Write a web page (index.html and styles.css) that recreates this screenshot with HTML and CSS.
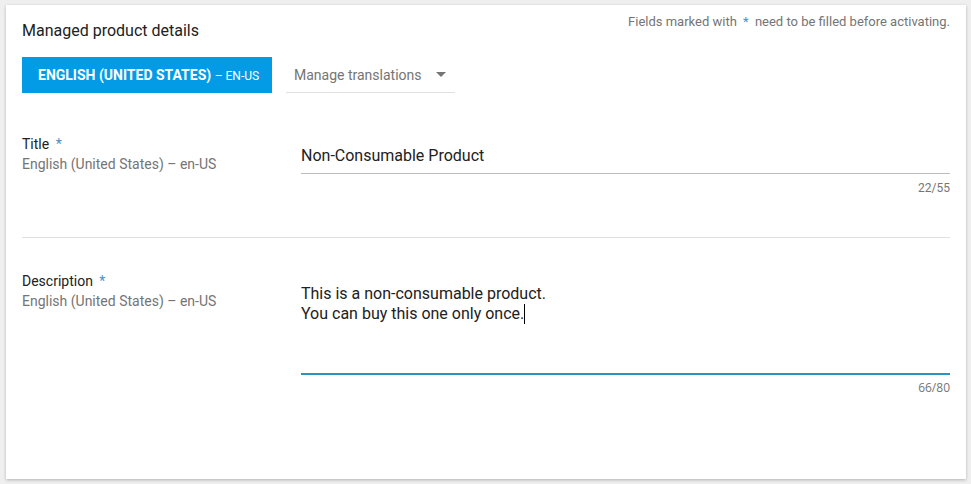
FILE: index.html
```html
<!DOCTYPE html>
<html lang="en">
<head>
    <meta charset="UTF-8">
    <title>Managed product details</title>
    <link rel="stylesheet" href="styles.css">
</head>
<body>

<div class="card">
    <div class="card-head">
        <h2>Managed product details</h2>
        <p class="note">Fields marked with <span class="req">*</span> need to be filled before activating.</p>
    </div>

    <div class="toolbar">
        <button class="lang-btn"><b>ENGLISH (UNITED STATES)</b> <span>– EN-US</span></button>
        <div class="dropdown">
            <span>Manage translations</span>
            <svg width="10" height="5" viewBox="0 0 10 5"><path d="M0 0h10L5 5z" fill="#757575"/></svg>
        </div>
    </div>

    <div class="row row-title">
        <div class="label">
            <div class="name">Title <span class="req">*</span></div>
            <div class="sub">English (United States) – en-US</div>
        </div>
        <div class="field">
            <div class="input">Non-Consumable Product</div>
            <div class="count">22/55</div>
        </div>
    </div>

    <div class="row row-desc">
        <div class="label">
            <div class="name">Description <span class="req">*</span></div>
            <div class="sub">English (United States) – en-US</div>
        </div>
        <div class="field">
            <div class="input textarea focused">This is a non-consumable product.<br>You can buy this one only once.<span class="caret"></span></div>
            <div class="count count-alt">66/80</div>
        </div>
    </div>
</div>

</body>
</html>
```

FILE: styles.css
```css
body {
    margin: 0;
    padding: 5px 5px 5px 6px;
    background-color: #efefef;
    font-family: Roboto, "Liberation Sans", sans-serif;
    color: #212121;
}
.card {
    background-color: white;
    height: 474px;
    box-sizing: border-box;
    padding: 9px 16px 0 16px;
    box-shadow: 0 1px 3px rgba(0, 0, 0, 0.25);
}
.card-head {
    display: flex;
    justify-content: space-between;
    align-items: flex-start;
}
.card-head h2 {
    margin: 7px 0 0 0;
    font-size: 16px;
    font-weight: normal;
    line-height: 20px;
}
.note {
    margin: 0;
    font-size: 13px;
    line-height: 16px;
    color: #757575;
}
.req {
    color: #4a90c8;
    margin: 0 3px;
}
.toolbar {
    display: flex;
    margin-top: 16px;
    gap: 14px;
}
.lang-btn {
    width: 250px;
    height: 36px;
    border: none;
    background-color: #039be5;
    color: white;
    font-family: Roboto, "Liberation Sans", sans-serif;
    font-size: 14px;
    padding: 0 14px 0 16px;
    text-align: left;
    white-space: nowrap;
}
.lang-btn b {
    font-weight: bold;
}
.lang-btn span {
    font-size: 12px;
}
.dropdown {
    width: 169px;
    height: 36px;
    box-sizing: border-box;
    border-bottom: 1px solid #e0e0e0;
    display: flex;
    align-items: center;
    justify-content: space-between;
    padding: 0 9px 0 8px;
    font-size: 14px;
    color: #757575;
}
.row {
    display: flex;
}
.row-title {
    padding: 41px 0 41px 0;
    border-bottom: 1px solid #e0e0e0;
}
.row-desc {
    padding-top: 33px;
}
.label {
    width: 279px;
    flex-shrink: 0;
    font-size: 14px;
    line-height: 20px;
}
.sub {
    color: #757575;
}
.field {
    flex: 1;
}
.input {
    margin-top: 10px;
    font-size: 16px;
    line-height: 24px;
    padding-bottom: 5px;
    border-bottom: 1px solid #bdbdbd;
}
.textarea {
    margin-top: 13px;
    line-height: 20px;
    height: 89px;
    box-sizing: content-box;
    padding-bottom: 0;
}
.focused {
    border-bottom: 2px solid #2a93c1;
}
.caret {
    display: inline-block;
    width: 1px;
    height: 20px;
    background-color: #000;
    vertical-align: top;
}
.count {
    margin-top: 6px;
    text-align: right;
    font-size: 12px;
    line-height: 16px;
    color: #757575;
}
.count-alt {
    margin-top: 5px;
    font-family: "Open Sans", sans-serif;
}
```
